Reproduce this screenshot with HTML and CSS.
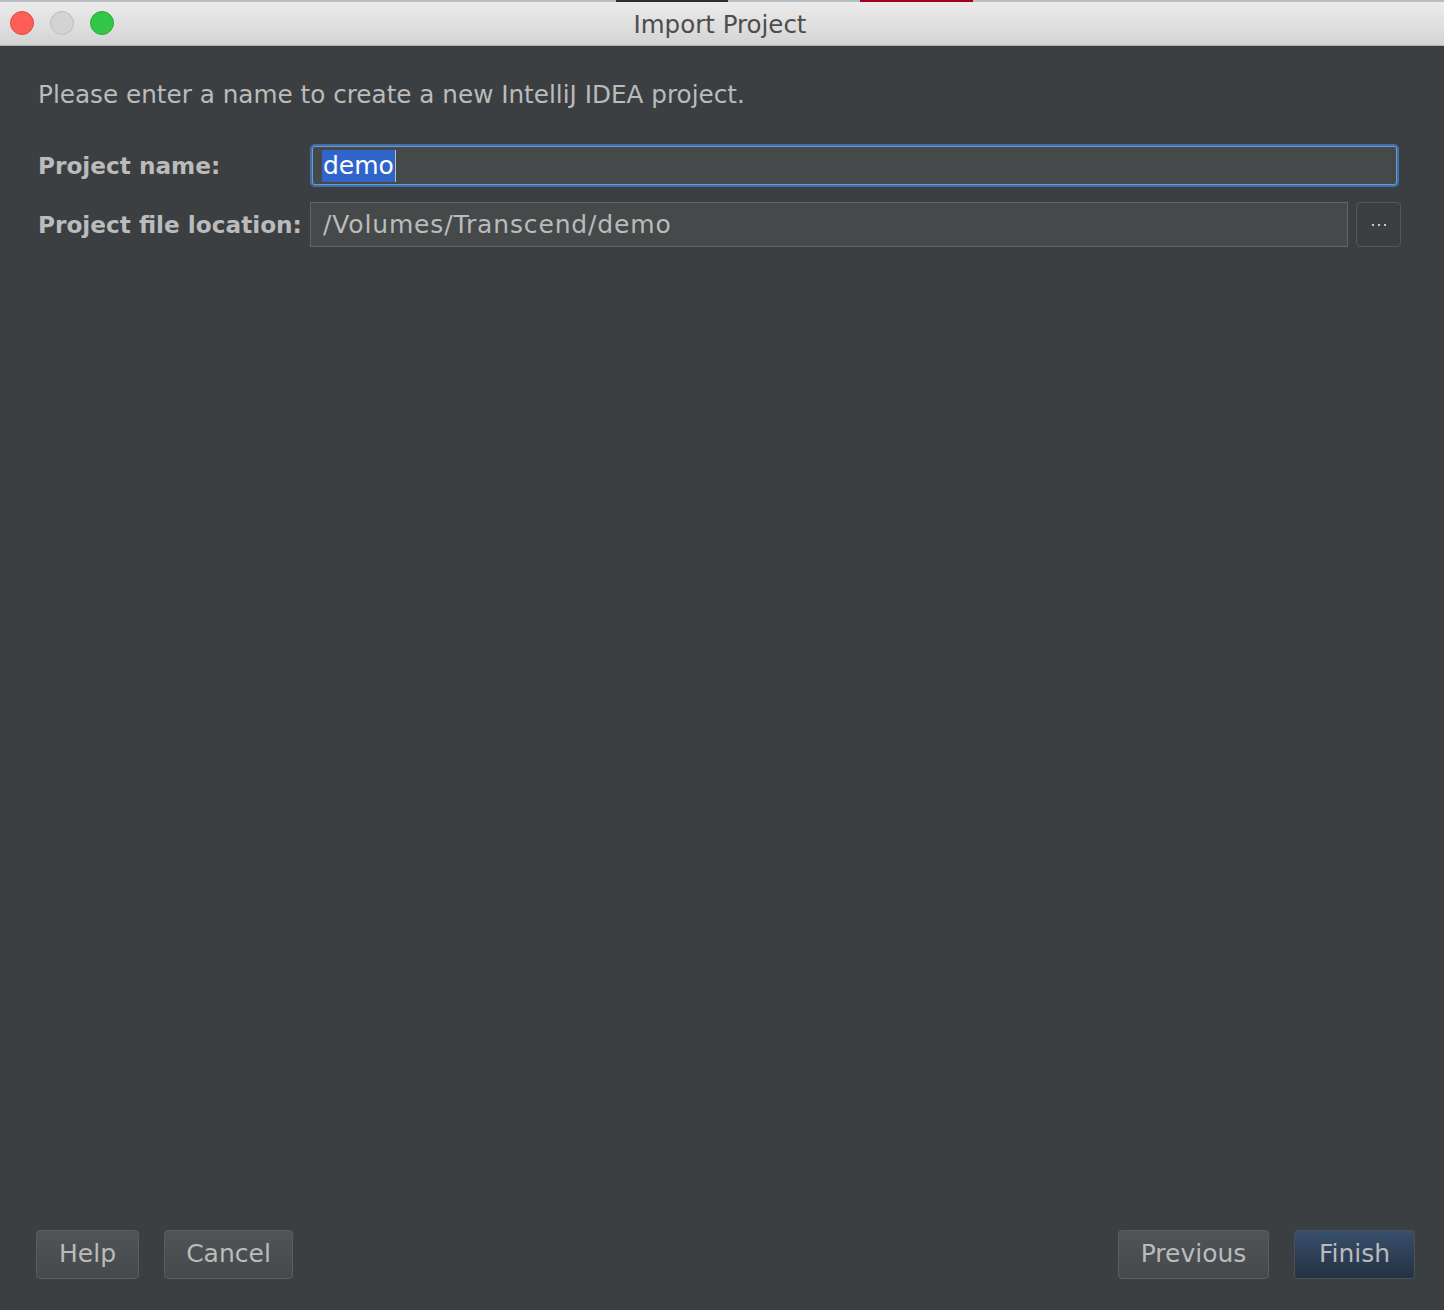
FILE: index.html
```html
<!DOCTYPE html>
<html>

<head>
  <meta charset="UTF-8">
  <meta name="viewport" content="width=device-width, initial-scale=1">
  <title>Import Project</title>

  <link rel="stylesheet" href="styles.css">
</head>

<body>

  <div class="window">
    <div class="top-strip"></div>
    <div class="titlebar">
      <div class="lights">
        <span class="light close"></span>
        <span class="light min"></span>
        <span class="light max"></span>
      </div>
      <div class="title">Import Project</div>
    </div>

    <div class="content">
      <p class="intro">Please enter a name to create a new IntelliJ IDEA project.</p>

      <div class="form">
        <label class="form-label">Project name:</label>
        <div class="field focused"><span class="selected">demo</span><span class="caret"></span></div>

        <label class="form-label">Project file location:</label>
        <div class="field-row">
          <div class="field path">/Volumes/Transcend/demo</div>
          <button class="browse-btn"><span class="dot"></span><span class="dot"></span><span class="dot"></span></button>
        </div>
      </div>
    </div>

    <div class="footer">
      <div class="btn-group">
        <button class="btn help-btn">Help</button>
        <button class="btn cancel-btn">Cancel</button>
      </div>
      <div class="btn-group">
        <button class="btn prev-btn">Previous</button>
        <button class="btn btn-default finish-btn">Finish</button>
      </div>
    </div>
  </div>

</body>

</html>
```

FILE: styles.css
```css
body {
  margin: 0;
  background: #3c3f41;
  font-family: "DejaVu Sans", "Liberation Sans", sans-serif;
}

.window {
  width: 1444px;
  height: 1310px;
  display: flex;
  flex-direction: column;
  background: #3c3f41;
}

.top-strip {
  height: 2px;
  background: linear-gradient(to right,
      #b6bec6 0, #b6bec6 616px,
      #2e2e2e 616px, #2e2e2e 728px,
      #b6bec6 728px, #b6bec6 860px,
      #a3001b 860px, #a3001b 973px,
      #b6bec6 973px);
}

.titlebar {
  position: relative;
  height: 43px;
  background: linear-gradient(#ececec, #d4d4d4);
  border-bottom: 1px solid #b0b0b0;
  display: flex;
  align-items: center;
  justify-content: center;
}

.lights {
  position: absolute;
  left: 10px;
  top: 9px;
  display: flex;
  gap: 16px;
}

.light {
  width: 24px;
  height: 24px;
  border-radius: 50%;
  box-sizing: border-box;
}

.light.close {
  background: #fd5f57;
  border: 1px solid #e14942;
}

.light.min {
  background: #d3d3d3;
  border: 1px solid #bdbdbd;
}

.light.max {
  background: #33c748;
  border: 1px solid #27aa35;
}

.title {
  font-size: 24.5px;
  color: #4d4d4d;
  padding-top: 2px;
  margin-left: -4px;
}

.content {
  flex: 1;
  padding: 0 43px 0 38px;
}

.intro {
  margin: 34px 0 34px;
  font-size: 24.7px;
  color: #bbbbbb;
  line-height: 30px;
}

.form {
  display: grid;
  grid-template-columns: 272px 1fr;
  row-gap: 15px;
  align-items: center;
}

.form-label {
  font-weight: bold;
  font-size: 23.2px;
  color: #bbbbbb;
  white-space: nowrap;
}

.field {
  height: 45px;
  box-sizing: border-box;
  background: #45494a;
  border: 1px solid #646464;
  color: #bbbbbb;
  font-size: 25px;
  padding-left: 12px;
  display: flex;
  align-items: center;
}

.field.path {
  letter-spacing: 0.85px;
}

.field.focused {
  height: 39px;
  margin: 2px 4px 2px 2px;
  border: 1px solid #6a9bd3;
  border-radius: 3px;
  box-shadow: 0 0 0 2px #3f6fa6;
  padding-left: 9px;
  color: #ffffff;
}

.selected {
  background: #2f65ca;
  color: #ffffff;
  line-height: 32px;
  padding: 0 1px;
}

.caret {
  width: 1px;
  height: 32px;
  background: #bbbbbb;
}

.field-row {
  display: flex;
  gap: 8px;
}

.field-row .field {
  flex: 1;
}

.browse-btn {
  width: 45px;
  height: 45px;
  background: #3c3f41;
  border: 1px solid #555859;
  border-radius: 4px;
  padding: 0 0 0 1px;
  display: flex;
  align-items: center;
  justify-content: center;
  gap: 4px;
}

.dot {
  width: 2px;
  height: 2px;
  background: #c8c8c8;
}

.footer {
  display: flex;
  justify-content: space-between;
  padding: 0 29px 31px 36px;
}

.btn-group {
  display: flex;
  gap: 25px;
}

.btn {
  height: 49px;
  box-sizing: border-box;
  border: 1px solid #5b5e60;
  border-radius: 4px;
  background: linear-gradient(#505456, #46494b);
  color: #bbbbbb;
  font-family: "DejaVu Sans", sans-serif;
  font-size: 25px;
  padding: 0 0 2px;
}

.help-btn {
  width: 103px;
}

.cancel-btn {
  width: 129px;
}

.prev-btn {
  width: 151px;
}

.finish-btn {
  width: 121px;
}

.btn-default {
  background: linear-gradient(#384f6b, #233143);
  border-color: #4b5155;
}
```
